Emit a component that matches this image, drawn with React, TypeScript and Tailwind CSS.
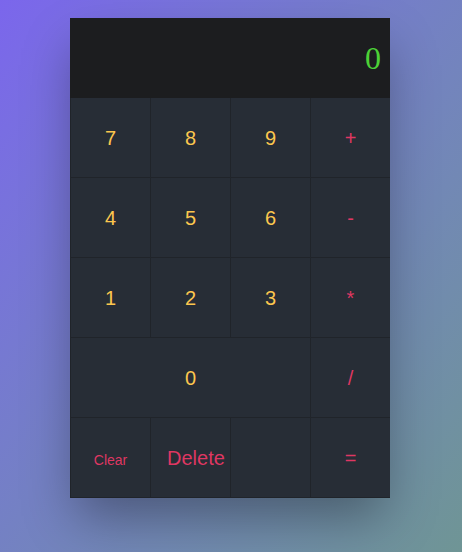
import React, { useState } from 'react';

const keys: { label: string; kind: 'num' | 'op' | 'blank'; span?: string }[] = [
    { label: '7', kind: 'num' },
    { label: '8', kind: 'num' },
    { label: '9', kind: 'num' },
    { label: '+', kind: 'op' },
    { label: '4', kind: 'num' },
    { label: '5', kind: 'num' },
    { label: '6', kind: 'num' },
    { label: '-', kind: 'op' },
    { label: '1', kind: 'num' },
    { label: '2', kind: 'num' },
    { label: '3', kind: 'num' },
    { label: '*', kind: 'op' },
    { label: '0', kind: 'num', span: 'col-span-3' },
    { label: '/', kind: 'op' },
];

const App: React.FC = () => {
    const [display, setDisplay] = useState('0');

    const press = (k: string) => {
        if (k === '=') {
            try {
                // eslint-disable-next-line no-new-func
                setDisplay(String(Function(`return (${display})`)()));
            } catch {
                setDisplay('0');
            }
            return;
        }
        setDisplay(d => (d === '0' ? k : d + k));
    };

    const cell = 'h-20 bg-[#272d36] border-l border-b border-[#20242a] flex items-center justify-center';

    return (
        <div className="min-h-screen w-full bg-gradient-to-br from-[#7b66ec] to-[#6f9595] pt-[18px] font-['Liberation_Sans',Arial,sans-serif]">
            <div className="ml-[70px] w-[320px] shadow-[0_24px_48px_-6px_rgba(0,0,0,0.35)]">
                <div className="h-20 bg-[#1c1d1f] flex items-center justify-end pr-[9px]">
                    <span className="text-[32px] text-[#4cd137] font-['Liberation_Serif',serif] leading-none">{display}</span>
                </div>
                <div className="grid grid-cols-4">
                    {keys.map(k => (
                        <button
                            key={k.label}
                            onClick={() => press(k.label)}
                            className={`${cell} ${k.span ?? ''} text-[20px] ${k.kind === 'num' ? 'text-[#fcc64e]' : 'text-[#df3762]'}`}
                        >
                            {k.label}
                        </button>
                    ))}
                    <button onClick={() => setDisplay('0')} className={`${cell} text-[14px] text-[#df3762] pt-[6px]`}>
                        Clear
                    </button>
                    <button onClick={() => setDisplay(d => (d.length > 1 ? d.slice(0, -1) : '0'))} className={`${cell} !justify-start pl-[16px] text-[20px] text-[#df3762]`}>
                        Delete
                    </button>
                    <div className={cell} />
                    <button onClick={() => press('=')} className={`${cell} text-[20px] text-[#df3762]`}>
                        =
                    </button>
                </div>
            </div>
        </div>
    );
};

export default App;
